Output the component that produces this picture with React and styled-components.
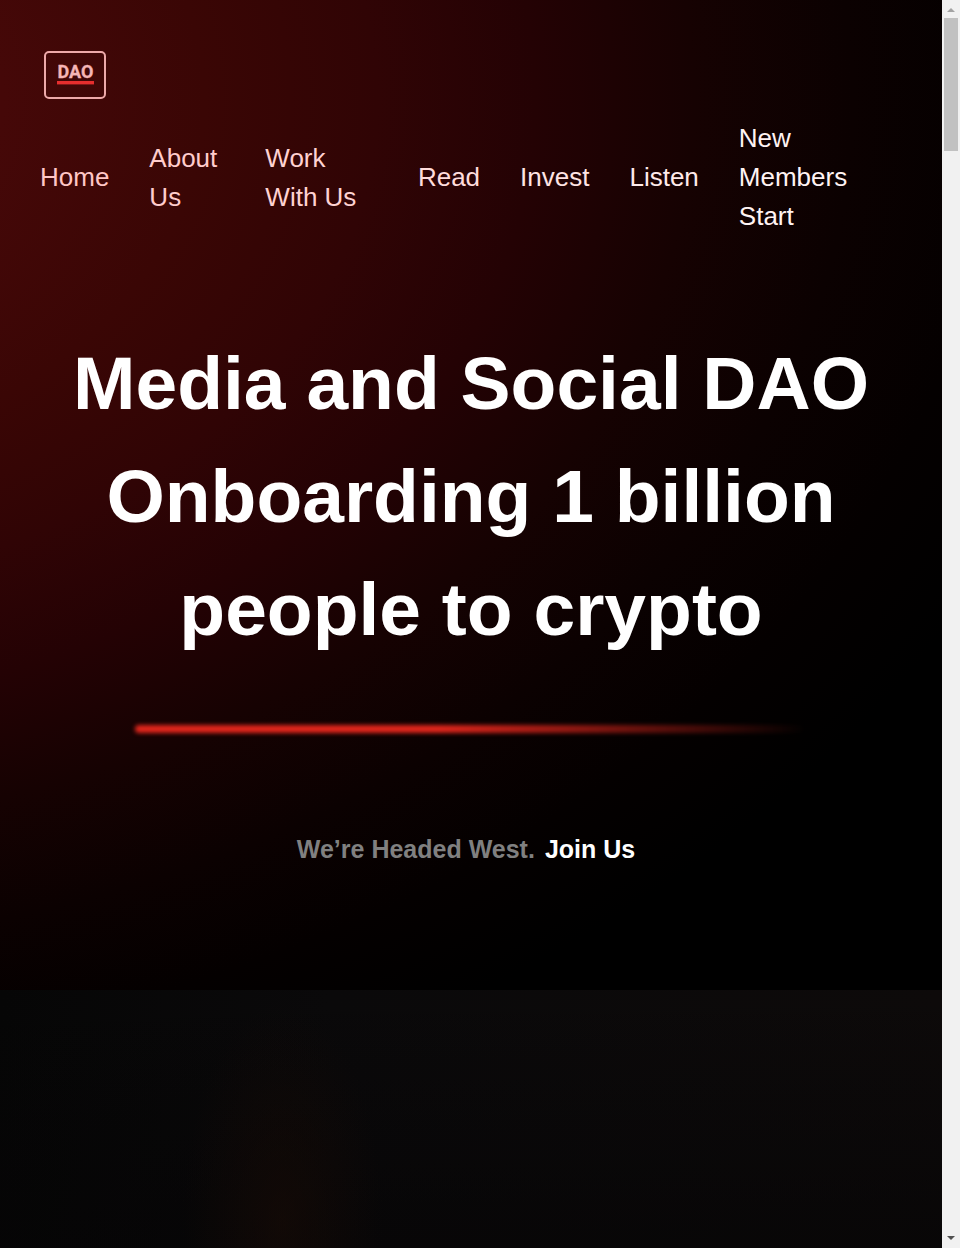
import React from "react";
import styled, { createGlobalStyle } from "styled-components";

const GlobalStyle = createGlobalStyle`
  * { box-sizing: border-box; }
  body {
    margin: 0;
    background: #000;
    color: #fff;
    font-family: "Liberation Sans", Arial, sans-serif;
  }
`;

const Shell = styled.div`
  display: flex;
  align-items: stretch;
  min-height: 100vh;
`;

const Page = styled.div`
  flex: 1;
  min-width: 0;
  display: flex;
  flex-direction: column;
`;

const Hero = styled.div`
  padding: 40px 40px 122px;
  background:
    radial-gradient(
      ellipse 1440px 1060px at -300px 100px,
      #500a0a 0%,
      #450808 21%,
      #3a0605 35%,
      #300405 47%,
      #240204 58%,
      #160202 69%,
      #0b0101 80%,
      #040000 90%,
      #000 100%
    );
`;

const Header = styled.header`
  display: flex;
  flex-direction: column;
  align-items: flex-start;
  gap: 9px;
`;

const LogoLink = styled.a`
  display: block;
  height: 70px;
  svg { display: block; }
`;

const NavList = styled.ul`
  display: flex;
  align-items: center;
  gap: 40px;
  margin: 0;
  padding: 0;
  list-style: none;
`;

const NavLink = styled.a`
  display: block;
  color: ${(p) => p.$tone};
  font-size: 26px;
  line-height: 39px;
  text-decoration: none;
`;

const Intro = styled.main`
  display: flex;
  flex-direction: column;
  align-items: center;
  margin-top: 91px;
`;

const Title = styled.h1`
  margin: 0;
  font-size: 75px;
  line-height: 113px;
  font-weight: 700;
  text-align: center;
`;

const Beam = styled.div`
  width: 78%;
  height: 8px;
  margin: 59px 0 97px;
  border-radius: 4px;
  background: linear-gradient(90deg, #e1261c 0%, #e1261c 45%, rgba(225, 38, 28, 0) 100%);
  filter: blur(2px);
`;

const Tagline = styled.p`
  display: flex;
  gap: 10px;
  margin: 0;
  padding-right: 10px;
  color: #808080;
  font-size: 25px;
  line-height: 38px;
  font-weight: 700;
`;

const JoinLink = styled.a`
  color: #fff;
  text-decoration: none;
`;

const Backdrop = styled.section`
  flex: 1;
  min-height: 258px;
  background:
    radial-gradient(ellipse 100px 220px at 30% 90%, rgba(24, 11, 6, 0.6), rgba(24, 11, 6, 0) 100%),
    linear-gradient(180deg, rgba(5, 4, 5, 0) 0%, rgba(5, 4, 5, 0.6) 100%),
    linear-gradient(90deg, #060606 0%, #0a090a 35%, #0d0a0a 100%);
`;

const ScrollTrack = styled.div`
  position: sticky;
  top: 0;
  flex: none;
  display: flex;
  flex-direction: column;
  align-items: center;
  width: 18px;
  height: 100vh;
  background: #f1f1f1;
`;

const ScrollArrow = styled.svg`
  flex: none;
  display: block;
  width: 18px;
  height: 18px;
`;

const ScrollThumb = styled.div`
  width: 14px;
  height: 133px;
  margin-bottom: auto;
  background: #c1c1c1;
`;

const links = [
  { label: "Home", tone: "#ffc6c6" },
  { label: "About Us", tone: "#ffcccc" },
  { label: "Work With Us", tone: "#ffd2d2" },
  { label: "Read", tone: "#ffdcdc" },
  { label: "Invest", tone: "#ffe3e3" },
  { label: "Listen", tone: "#ffeaea" },
  { label: "New Members Start", tone: "#fff3f3" },
];

function Logo() {
  return (
    <svg width="70" height="70" viewBox="0 0 70 70" role="img" aria-label="DAO">
      <defs>
        <filter id="glow" x="-20%" y="-200%" width="140%" height="500%">
          <feGaussianBlur stdDeviation="0.6" />
        </filter>
      </defs>
      <rect x="5" y="12" width="60" height="46" rx="4" fill="none" stroke="#eda9a9" strokeWidth="2" />
      <rect x="17" y="41" width="37" height="3.4" fill="#e62e2e" filter="url(#glow)" />
      <text
        x="35.5"
        y="38"
        textAnchor="middle"
        fill="#f5b5b5"
        stroke="#f5b5b5"
        strokeWidth="0.3"
        fontFamily="Roboto, sans-serif"
        fontWeight="700"
        fontSize="18"
      >
        DAO
      </text>
    </svg>
  );
}

export default function App() {
  return (
    <>
      <GlobalStyle />
      <Shell>
        <Page>
          <Hero>
            <Header>
              <LogoLink href="#home">
                <Logo />
              </LogoLink>
              <nav aria-label="Main">
                <NavList>
                  {links.map((link) => (
                    <li key={link.label}>
                      <NavLink href="#" $tone={link.tone}>{link.label}</NavLink>
                    </li>
                  ))}
                </NavList>
              </nav>
            </Header>
            <Intro>
              <Title>Media and Social DAO Onboarding 1 billion people to crypto</Title>
              <Beam />
              <Tagline>
                <span>We’re Headed West.</span>
                <JoinLink href="#join">Join Us</JoinLink>
              </Tagline>
            </Intro>
          </Hero>
          <Backdrop />
        </Page>
        <ScrollTrack aria-hidden="true">
          <ScrollArrow viewBox="0 0 18 18">
            <path d="M5 12 L9 8 L13 12 Z" fill="#a3a3a3" />
          </ScrollArrow>
          <ScrollThumb />
          <ScrollArrow viewBox="0 0 18 18">
            <path d="M5 6 L9 10 L13 6 Z" fill="#505050" />
          </ScrollArrow>
        </ScrollTrack>
      </Shell>
    </>
  );
}
